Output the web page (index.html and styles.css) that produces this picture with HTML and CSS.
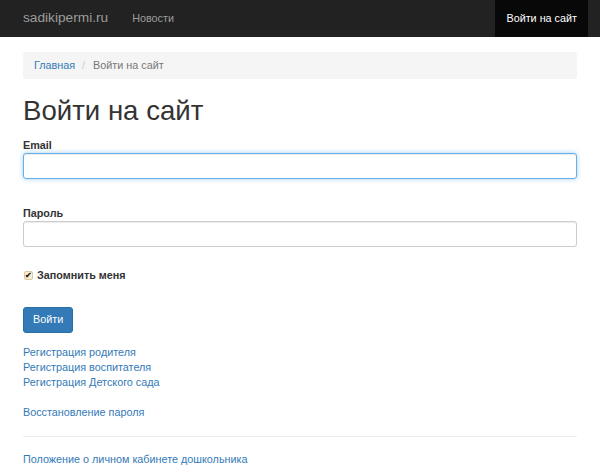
FILE: index.html
```html
<!DOCTYPE html>
<html lang="ru">
<head>
<meta charset="utf-8">
<title>Войти на сайт</title>
<link rel="stylesheet" href="styles.css">
</head>
<body>
<nav class="navbar">
  <a class="brand" href="#">sadikipermi.ru</a>
  <ul class="nav">
    <li><a href="#">Новости</a></li>
  </ul>
  <ul class="nav nav-right">
    <li class="active"><a href="#">Войти на сайт</a></li>
  </ul>
</nav>
<main class="container">
  <ol class="breadcrumb">
    <li><a href="#">Главная</a></li>
    <li class="crumb-active">Войти на сайт</li>
  </ol>
  <h1 class="title">Войти на сайт</h1>
  <form class="login-form">
    <div class="group group-email">
      <label class="label" for="email">Email</label>
      <input class="control control-focus" id="email" type="text">
    </div>
    <div class="group group-pass">
      <label class="label" for="pass">Пароль</label>
      <input class="control" id="pass" type="password">
    </div>
    <div class="group group-check">
      <label class="check-label"><span class="check-box">&#10004;</span>Запомнить меня</label>
    </div>
    <div class="group group-btn">
      <button class="btn" type="button">Войти</button>
    </div>
  </form>
  <div class="links">
    <a href="#">Регистрация родителя</a>
    <a href="#">Регистрация воспитателя</a>
    <a href="#">Регистрация Детского сада</a>
    <a class="link-gap" href="#">Восстановление пароля</a>
  </div>
  <hr class="divider">
  <div class="links">
    <a href="#">Положение о личном кабинете дошкольника</a>
  </div>
</main>
</body>
</html>
```
FILE: styles.css
```css
html, body {
  margin: 0;
  padding: 0;
  background: #fff;
}
body {
  font-family: "Liberation Sans", Arial, Helvetica, sans-serif;
  font-size: 10.8px;
  line-height: 15px;
  color: #333;
}
a {
  color: #337ab7;
  text-decoration: none;
}
.navbar {
  display: flex;
  align-items: stretch;
  height: 37px;
  background: #222;
  padding: 0 12px 0 23px;
  box-sizing: border-box;
}
.brand {
  font-size: 13.7px;
  line-height: 15px;
  padding: 10px 0 0;
  color: #9d9d9d;
  margin-right: 13px;
}
.nav {
  list-style: none;
  margin: 0;
  padding: 0;
  display: flex;
}
.nav li a {
  display: block;
  height: 37px;
  box-sizing: border-box;
  padding: 10.5px 11px 0;
  color: #9d9d9d;
}
.nav-right {
  margin-left: auto;
}
.nav li.active a {
  background: #080808;
  color: #fff;
}
.container {
  padding: 0 23px;
}
.breadcrumb {
  list-style: none;
  margin: 15px 0 0;
  padding: 6px 11px;
  background: #f5f5f5;
  border-radius: 3px;
  display: flex;
}
.breadcrumb li + li::before {
  content: "/\00a0";
  padding: 0 5px 0 7px;
  color: #ccc;
}
.crumb-active {
  color: #777;
}
.title {
  font-size: 27.6px;
  line-height: 30px;
  font-weight: normal;
  margin: 17px 0 0;
  color: #333;
}
.login-form {
  margin: 0;
}
.label {
  display: block;
  font-weight: bold;
  line-height: 15px;
}
.group-email {
  margin-top: 12px;
}
.group-pass {
  margin-top: 26.5px;
}
.group-check {
  margin-top: 21px;
}
.group-btn {
  margin-top: 24px;
}
.control {
  display: block;
  width: 100%;
  height: 26px;
  box-sizing: border-box;
  border: 1px solid #ccc;
  border-radius: 3px;
  background: #fff;
  box-shadow: inset 0 1px 1px rgba(0,0,0,.075);
  font: inherit;
  padding: 4px 9px;
  margin: 0;
}
.control-focus {
  border-color: #66afe9;
  outline: none;
  box-shadow: inset 0 1px 1px rgba(0,0,0,.075), 0 0 5px rgba(102,175,233,.6);
}
.check-label {
  display: flex;
  align-items: center;
  font-weight: bold;
  line-height: 15px;
}
.check-box {
  display: inline-flex;
  align-items: center;
  justify-content: center;
  width: 9px;
  height: 9px;
  box-sizing: border-box;
  border: 1px solid #d8c9a8;
  border-radius: 2px;
  background: #fbeccd;
  color: #222;
  font-size: 8px;
  line-height: 8px;
  margin: 1px 4px 0 1px;
}
.btn {
  display: inline-block;
  height: 26px;
  box-sizing: border-box;
  padding: 4.5px 9px;
  font: inherit;
  line-height: 15px;
  color: #fff;
  background: #337ab7;
  border: 1px solid #2e6da4;
  border-radius: 3px;
  margin: 0;
}
.links {
  display: flex;
  flex-direction: column;
  align-items: flex-start;
}
form + .links {
  margin-top: 12.5px;
}
.link-gap {
  margin-top: 15px;
}
.divider {
  border: 0;
  border-top: 1px solid #eee;
  margin: 16px 0 15px;
  height: 0;
}
```
